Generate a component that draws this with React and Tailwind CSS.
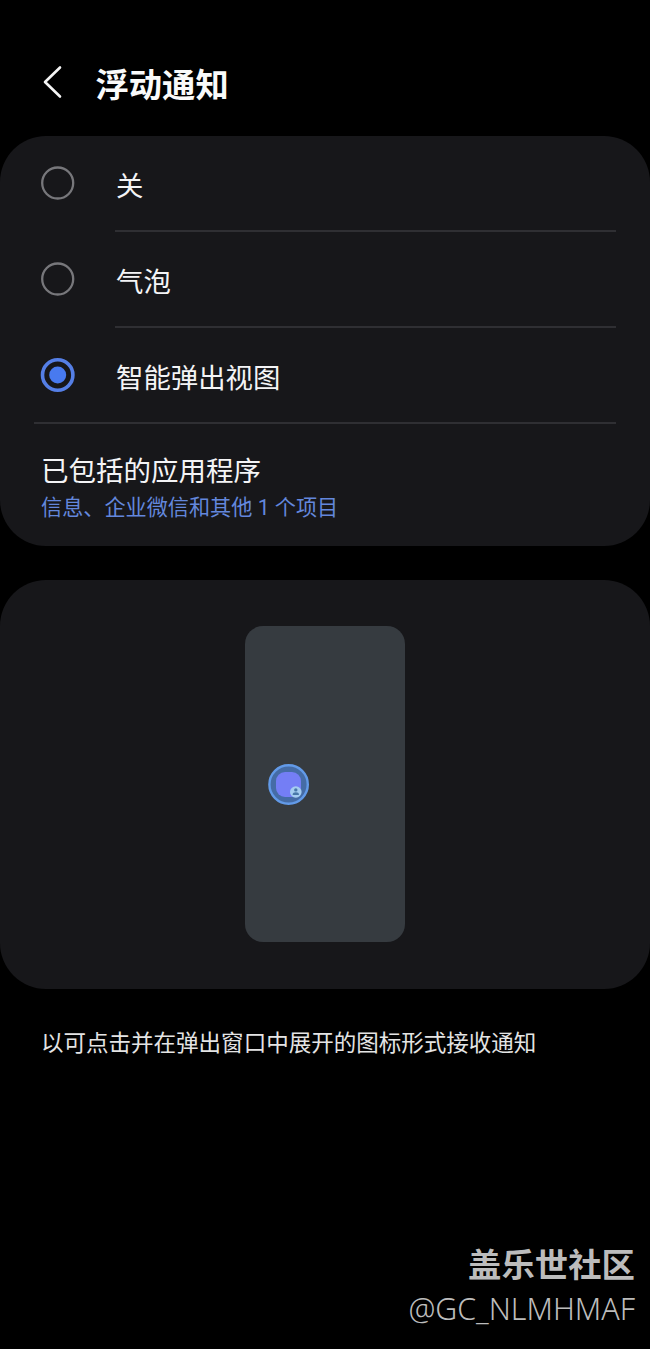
import React from "react";

const options = [
  { id: "off", label: "关", selected: false },
  { id: "bubble", label: "气泡", selected: false },
  { id: "popup", label: "智能弹出视图", selected: true },
];

function Radio({ selected }) {
  return (
    <svg className="h-9 w-9 shrink-0" viewBox="0 0 36 36" fill="none">
      {selected ? (
        <>
          <circle cx="17.7" cy="18" r="15.2" stroke="#557fe6" strokeWidth="3.6" />
          <circle cx="17.7" cy="18" r="8.5" fill="#487aef" />
        </>
      ) : (
        <circle cx="17.7" cy="18" r="15.5" stroke="#77777b" strokeWidth="2.3" />
      )}
    </svg>
  );
}

function OptionRow({ label, selected }) {
  return (
    <div className="flex h-24 items-center pl-10">
      <Radio selected={selected} />
      <span className="ml-10 pt-px text-[27.4px] leading-9 text-[#f4f4f6]">{label}</span>
    </div>
  );
}

function BubblePreview() {
  return (
    <div className="flex h-[316px] w-40 flex-col rounded-[18px] bg-[#363b40] pt-[137px] pl-[22px]">
      <svg className="h-11 w-11" viewBox="0 0 44 44">
        <circle cx="21.6" cy="21.5" r="19.2" fill="#456ca6" stroke="#629ae8" strokeWidth="2.4" />
        <rect x="9" y="9" width="25" height="25" rx="9" fill="#747ef5" />
        <circle cx="28.8" cy="29" r="5.8" fill="#a5cdf0" />
        <circle cx="28.8" cy="26.9" r="1.7" fill="#4878a8" />
        <path d="M25.7 32v-.8c0-1.3 1.1-2 3.1-2s3.1.7 3.1 2v.8z" fill="#4878a8" />
      </svg>
    </div>
  );
}

function App() {
  return (
    <div className="flex h-[1349px] w-[650px] flex-col bg-black font-['Noto_Sans_CJK_SC',sans-serif]">
      <header className="flex h-[135.5px] items-center pt-7 pl-10">
        <svg className="h-9 w-6" viewBox="0 0 24 36" fill="none">
          <path d="M20 3.5 5 18l15 14.5" stroke="#f5f5f5" strokeWidth="2.6" strokeLinecap="round" strokeLinejoin="round" />
        </svg>
        <h1 className="ml-[31.5px] pt-0.5 text-[33.3px] leading-10 font-bold text-[#fafafa]">浮动通知</h1>
      </header>

      <section className="h-[410px] rounded-[46px] bg-[#17171a]">
        {options.map((option, index) => (
          <div key={option.id} className={index === 0 ? "-mt-[0.5px]" : ""}>
            <OptionRow label={option.label} selected={option.selected} />
            <div className={`-mt-px mr-[34px] h-0.5 bg-[#2f2f33] ${option.selected ? "ml-[34px]" : "ml-[115px]"} -mb-px`} />
          </div>
        ))}
        <div className="pt-[26px] pl-[41px]">
          <p className="text-[27.5px] leading-10 text-[#f4f4f6]">已包括的应用程序</p>
          <p className="pt-[3px] font-[Roboto,'Noto_Sans_CJK_SC',sans-serif] text-[21.15px] leading-8 text-[#6387dc]">信息、企业微信和其他 1 个项目</p>
        </div>
      </section>

      <section className="mt-[34.5px] flex h-[409px] justify-center rounded-[46px] bg-[#17171a] pt-[46px] pr-px">
        <BubblePreview />
      </section>

      <p className="mt-[34px] pl-[41px] text-[22.53px] leading-9 text-[#e4e4e4]">以可点击并在弹出窗口中展开的图标形式接收通知</p>

      <footer className="mt-auto flex flex-col items-end pr-[15px] pb-[18px] text-[#bcbcbc]">
        <span className="text-[33.4px] leading-[45px] font-bold">盖乐世社区</span>
        <span className="pt-0.5 font-['Noto_Sans',sans-serif] text-[30.3px] leading-[44px] font-light">@GC_NLMHMAF</span>
      </footer>
    </div>
  );
}

export default App;
